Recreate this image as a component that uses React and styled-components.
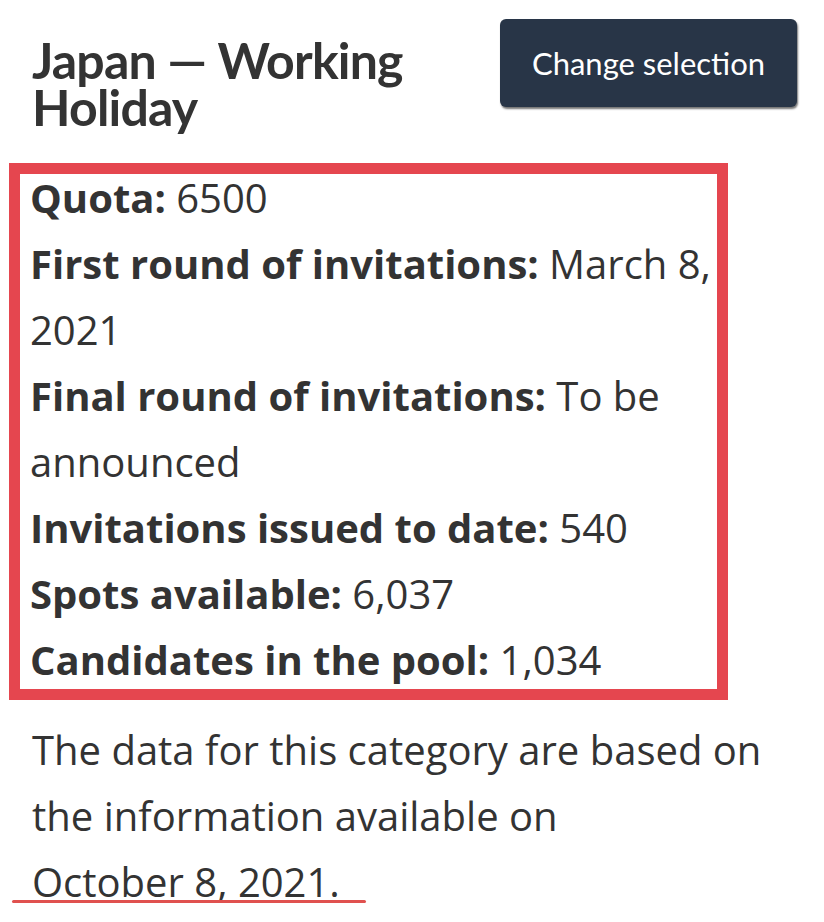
import React from "react";
import styled, { createGlobalStyle } from "styled-components";

const GlobalStyle = createGlobalStyle`
  body {
    margin: 0;
    background: #fff;
    font-family: "Open Sans", "Liberation Sans", sans-serif;
    color: #333;
  }
`;

const rows = [
  { label: "Quota:", value: "6500" },
  { label: "First round of invitations:", value: "March 8, 2021" },
  { label: "Final round of invitations:", value: "To be announced" },
  { label: "Invitations issued to date:", value: "540" },
  { label: "Spots available:", value: "6,037" },
  { label: "Candidates in the pool:", value: "1,034" },
];

export default function App() {
  return (
    <>
      <GlobalStyle />
      <Page>
        <Header>
          <Title>Japan — Working Holiday</Title>
          <ChangeButton>Change selection</ChangeButton>
        </Header>
        <HighlightBox>
          <DataList>
            {rows.map((row, index) => (
              <DataRow key={index}>
                <Label>{row.label}</Label> {row.value}
              </DataRow>
            ))}
          </DataList>
        </HighlightBox>
        <Note>
          The data for this category are based on the information available on{" "}
          <Marked>October 8, 2021.</Marked>
        </Note>
      </Page>
    </>
  );
}

const Page = styled.div`
  width: 824px;
  box-sizing: border-box;
  padding: 19px 27px 0 9px;
  display: flex;
  flex-direction: column;
`;

const Header = styled.div`
  display: flex;
  justify-content: space-between;
  align-items: flex-start;
`;

const Title = styled.h1`
  margin: 18px 0 0;
  padding-left: 23px;
  width: 400px;
  font-family: Lato, "Open Sans", sans-serif;
  font-size: 50px;
  font-weight: 700;
  letter-spacing: -0.8px;
  line-height: 47px;
  color: #333;
`;

const ChangeButton = styled.button`
  width: 297px;
  height: 88px;
  border: none;
  border-radius: 6px;
  background: #283547;
  box-shadow: 1px 2px 2px rgba(0, 0, 0, 0.55);
  color: #fff;
  font-family: Lato, "Open Sans", sans-serif;
  font-size: 31px;
  font-weight: 400;
  cursor: pointer;
`;

const HighlightBox = styled.div`
  margin-top: 32px;
  width: 719px;
  box-sizing: border-box;
  border: 11px solid #e5464f;
  padding: 0 4px 0 10px;
`;

const DataList = styled.div`
  margin: -9px 0 -4px;
`;

const DataRow = styled.div`
  font-size: 40px;
  line-height: 66px;
  color: #333;
`;

const Label = styled.strong`
  font-weight: 700;
`;

const Note = styled.p`
  margin: 17px 0 0;
  padding-left: 23px;
  font-size: 40px;
  line-height: 66px;
  color: #333;
`;

const Marked = styled.span`
  position: relative;
  white-space: nowrap;

  &::after {
    content: "";
    position: absolute;
    left: -20px;
    right: -26px;
    bottom: 6px;
    height: 3px;
    border-radius: 2px;
    background: #e0514f;
  }
`;
